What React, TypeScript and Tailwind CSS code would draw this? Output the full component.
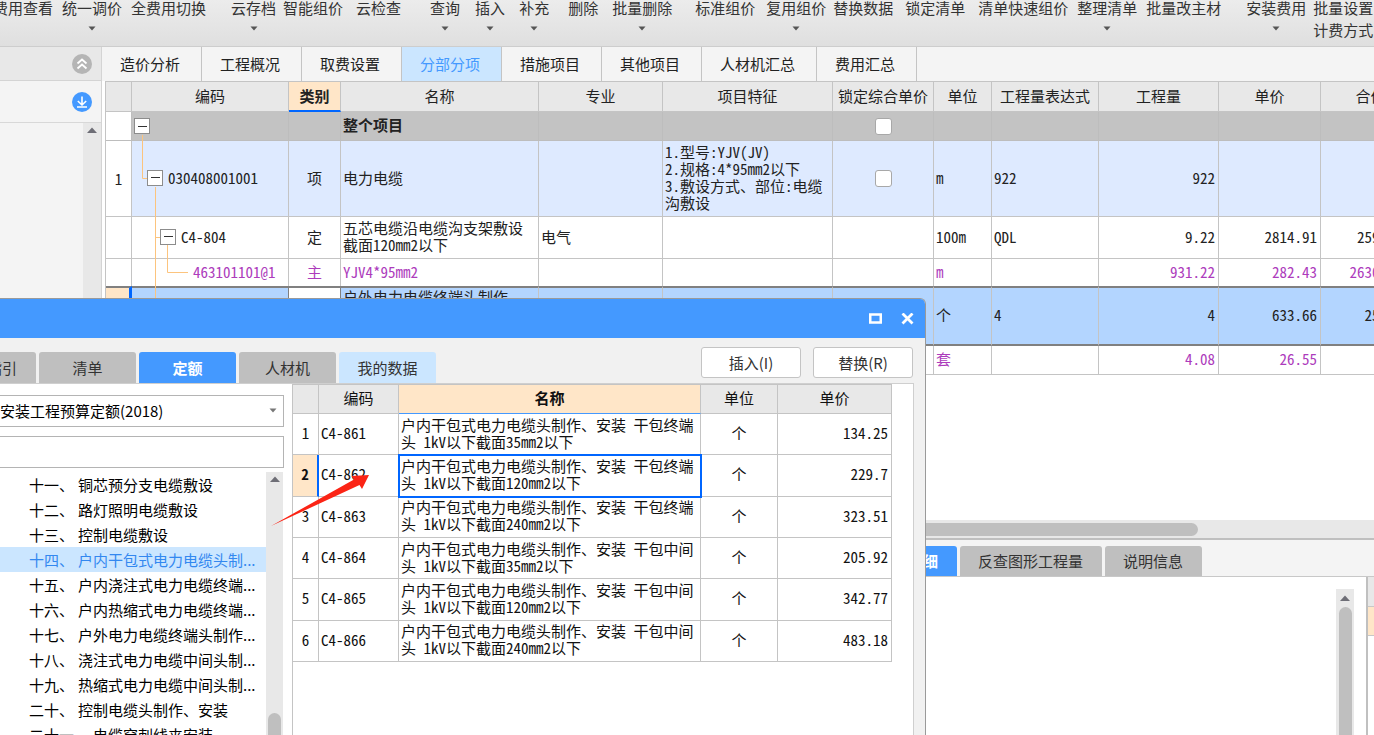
import React, { useState } from 'react';
import clsx from 'clsx';

const TOOLBAR = [
    { label: '费用查看', gap: '-ml-[7px]' },
    { label: '统一调价', gap: 'ml-[9px]', menu: true },
    { label: '全费用切换', gap: 'ml-[9px]' },
    { label: '云存档', gap: 'ml-[25px]', menu: true },
    { label: '智能组价', gap: 'ml-[7px]' },
    { label: '云检查', gap: 'ml-[13px]' },
    { label: '查询', gap: 'ml-[29px]', menu: true },
    { label: '插入', gap: 'ml-[15px]', menu: true },
    { label: '补充', gap: 'ml-[14px]', menu: true },
    { label: '删除', gap: 'ml-[19px]' },
    { label: '批量删除', gap: 'ml-[14px]', menu: true },
    { label: '标准组价', gap: 'ml-[23px]' },
    { label: '复用组价', gap: 'ml-[11px]', menu: true },
    { label: '替换数据', gap: 'ml-[7px]' },
    { label: '锁定清单', gap: 'ml-[12px]' },
    { label: '清单快速组价', gap: 'ml-[13px]' },
    { label: '整理清单', gap: 'ml-[9px]', menu: true },
    { label: '批量改主材', gap: 'ml-[9px]' },
    { label: '安装费用', gap: 'ml-[25px]', menu: true },
    { label: '批量设置', gap: 'ml-[7px]', second: '计费方式' },
];

const TABS = ['造价分析', '工程概况', '取费设置', '分部分项', '措施项目', '其他项目', '人材机汇总', '费用汇总'];

const COLUMNS = [
    { title: '', width: 26 },
    { title: '编码', width: 157 },
    { title: '类别', width: 52 },
    { title: '名称', width: 198 },
    { title: '专业', width: 124 },
    { title: '项目特征', width: 170 },
    { title: '锁定综合单价', width: 101 },
    { title: '单位', width: 58 },
    { title: '工程量表达式', width: 107 },
    { title: '工程量', width: 120 },
    { title: '单价', width: 102 },
    { title: '合价', width: 100 },
];

const ROWS = [
    { no: '', code: '', expand: true, indent: 'pl-[2px]', kind: '', name: '整个项目', major: '', feature: [], lock: true, unit: '', expr: '', qty: '', price: '', total: '', row: 'h-[29px] bg-[#c3c3c3] font-bold', line: 'border-[#bdbdbd]' },
    { no: '1', code: '030408001001', expand: true, indent: 'pl-[15px]', kind: '项', name: '电力电缆', major: '', feature: ['1.型号:YJV(JV)', '2.规格:4*95mm2以下', '3.敷设方式、部位:电缆沟敷设'], lock: true, unit: 'm', expr: '922', qty: '922', price: '', total: '', row: 'h-[76px] bg-[#deeaff]', line: 'border-[#c4c4c4]' },
    { no: '', code: 'C4-804', expand: true, indent: 'pl-[28px]', kind: '定', name: '五芯电缆沿电缆沟支架敷设 截面120mm2以下', major: '电气', feature: [], lock: false, unit: '100m', expr: 'QDL', qty: '9.22', price: '2814.91', total: '25953.47', row: 'h-[42px]', line: 'border-[#c4c4c4]' },
    { no: '', code: '463101101@1', expand: false, indent: 'pl-[61px]', kind: '主', name: 'YJV4*95mm2', major: '', feature: [], lock: false, unit: 'm', expr: '', qty: '931.22', price: '282.43', total: '263004.46', row: 'h-[27px] text-[#ad3cbc]', line: 'border-[#c4c4c4] border-b-0' },
    { no: '', code: '', expand: false, indent: '', kind: '', name: '户外电力电缆终端头制作、', major: '', feature: [], lock: false, unit: '个', expr: '4', qty: '4', price: '633.66', total: '2534.64', selected: true, row: 'h-[60px] bg-[#b3d5ff]', line: 'border-[#c4c4c4] border-t-2 border-b-2 border-t-[#808080] border-b-[#808080]' },
    { no: '', code: '', expand: false, indent: '', kind: '', name: '', major: '', feature: [], lock: false, unit: '套', expr: '', qty: '4.08', price: '26.55', total: '', row: 'h-[29px] text-[#ad3cbc]', line: 'border-[#c4c4c4]' },
];

const CHAPTERS = [
    ['十一、', '铜芯预分支电缆敷设'],
    ['十二、', '路灯照明电缆敷设'],
    ['十三、', '控制电缆敷设'],
    ['十四、', '户内干包式电力电缆头制...'],
    ['十五、', '户内浇注式电力电缆终端...'],
    ['十六、', '户内热缩式电力电缆终端...'],
    ['十七、', '户外电力电缆终端头制作...'],
    ['十八、', '浇注式电力电缆中间头制...'],
    ['十九、', '热缩式电力电缆中间头制...'],
    ['二十、', '控制电缆头制作、安装'],
    ['二十一、', '电缆穿刺线夹安装'],
];

const QUOTAS = [
    { code: 'C4-861', name: '户内干包式电力电缆头制作、安装 干包终端头 1kV以下截面35mm2以下', price: '134.25' },
    { code: 'C4-862', name: '户内干包式电力电缆头制作、安装 干包终端头 1kV以下截面120mm2以下', price: '229.7' },
    { code: 'C4-863', name: '户内干包式电力电缆头制作、安装 干包终端头 1kV以下截面240mm2以下', price: '323.51' },
    { code: 'C4-864', name: '户内干包式电力电缆头制作、安装 干包中间头 1kV以下截面35mm2以下', price: '205.92' },
    { code: 'C4-865', name: '户内干包式电力电缆头制作、安装 干包中间头 1kV以下截面120mm2以下', price: '342.77' },
    { code: 'C4-866', name: '户内干包式电力电缆头制作、安装 干包中间头 1kV以下截面240mm2以下', price: '483.18' },
];

// half-width latin, so two digits take the room of one Chinese character
const GRID_FONT = "[font-feature-settings:'hwid'] leading-[17px]";

const Caret = ({ up = false, className = '' }: { up?: boolean; className?: string }) => (
    <svg width="10" height="6" viewBox="0 0 10 6" className={className} aria-hidden="true">
        <path d={up ? 'M0 6L5 0.5L10 6Z' : 'M1.5 0.5H8.5L5 4.5Z'} fill="currentColor" />
    </svg>
);

const Toolbar = () => (
    <div className="flex h-[47px] shrink-0 items-start overflow-hidden border-b border-[#cdcdcd] bg-gradient-to-b from-[#ececec] to-[#dfdfdf]">
        {TOOLBAR.map((item) => (
            <button key={item.label} type="button" className={clsx('-mt-[3px] flex shrink-0 flex-col items-center leading-[22px] text-[#333]', item.gap)}>
                <span>{item.label}</span>
                {item.second && <span>{item.second}</span>}
                {item.menu && <Caret className="mt-[7px] text-[#555]" />}
            </button>
        ))}
    </div>
);

const SidePanel = () => (
    <aside className="flex w-[102px] shrink-0 flex-col border-r border-[#d4d4d4] bg-[#f4f4f4]">
        <div className="flex h-[34px] shrink-0 items-center justify-end border-b border-[#d4d4d4] bg-[#e8e8e8] pr-[9px]">
            <button type="button" aria-label="折叠">
                <svg width="20" height="20" viewBox="0 0 20 20" className="block">
                    <circle cx="10" cy="10" r="10" fill="#b5b5b5" />
                    <path d="M5.5 9.5L10 5.5L14.5 9.5M5.5 14.5L10 10.5L14.5 14.5" fill="none" stroke="#fff" strokeWidth="1.8" />
                </svg>
            </button>
        </div>
        <div className="flex h-[42px] shrink-0 items-center justify-end border-b border-[#d8d8d8] pr-[9px]">
            <button type="button" aria-label="下载">
                <svg width="20" height="20" viewBox="0 0 20 20" className="block">
                    <circle cx="10" cy="10" r="10" fill="#4499ff" />
                    <path d="M10 4.5V13M5.8 9L10 13L14.2 9M5 15H15" fill="none" stroke="#fff" strokeWidth="1.6" />
                </svg>
            </button>
        </div>
        <div className="flex flex-1 justify-end">
            <div className="flex w-[18px] justify-center bg-[#e8e8e8] pt-1">
                <Caret up className="text-[#6e6e76]" />
            </div>
        </div>
    </aside>
);

const BillTable = () => (
    <div className={clsx('relative min-h-0 flex-1 overflow-hidden bg-white pl-[3px]', GRID_FONT)}>
        <table className="w-[1316px] table-fixed border-separate border-spacing-0 border-l border-[#c4c4c4] text-[#222]">
            <colgroup>
                {COLUMNS.map((col, i) => <col key={i} style={{ width: col.width }} />)}
            </colgroup>
            <thead>
                <tr className="h-[31px]">
                    {COLUMNS.map((col, i) => (
                        <th
                            key={i}
                            className={clsx(
                                'border-t border-r border-b border-[#c4c4c4] p-0 pb-[2px] whitespace-nowrap',
                                col.title === '类别' ? 'border-b-2 border-b-[#0066ff] bg-[#ffe6c8] font-bold' : 'bg-[#e8e8e8] font-normal',
                            )}
                        >
                            {col.title}
                        </th>
                    ))}
                </tr>
            </thead>
            <tbody>
                {ROWS.map((r, i) => {
                    const line = clsx('border-r border-b p-0', r.line);
                    const cell = clsx(line, 'pb-[3px]');
                    return (
                        <tr key={i} className={r.row}>
                            <td className={clsx(line, 'text-center text-[#222]', r.selected ? 'border-r-[3px] border-r-[#0066ff] bg-[#ffe6c8]' : 'bg-white')}>{r.no}</td>
                            <td className={clsx(line, r.indent, r.code && 'pb-[2px]', r.selected && 'border-r-[#808080]')}>
                                <div className="flex items-center gap-[5px]">
                                    {r.expand && (
                                        <button type="button" aria-label="收起" className="flex size-4 items-center justify-center border border-[#8c8c8c] bg-white">
                                            <span className="h-px w-[9px] bg-[#333]" />
                                        </button>
                                    )}
                                    {r.code}
                                </div>
                            </td>
                            <td className={clsx(cell, 'text-center', r.selected && 'border-r-[#808080] bg-white')}>{r.kind}</td>
                            <td className={clsx(cell, 'px-[2px]', r.selected && 'align-top')}>{r.name}</td>
                            <td className={clsx(cell, 'px-[2px]')}>{r.major}</td>
                            <td className={clsx(cell, 'px-[2px]')}>
                                {r.feature.map((text) => <div key={text}>{text}</div>)}
                            </td>
                            <td className={line}>
                                {r.lock && <input type="checkbox" aria-label="锁定综合单价" className="mx-auto block size-[17px] appearance-none rounded-[3px] border border-[#a8a8a8] bg-white" />}
                            </td>
                            <td className={clsx(cell, 'px-[2px]')}>{r.unit}</td>
                            <td className={clsx(cell, 'px-[2px]')}>{r.expr}</td>
                            <td className={clsx(cell, 'px-[3px] text-right')}>{r.qty}</td>
                            <td className={clsx(cell, 'px-[3px] text-right')}>{r.price}</td>
                            <td className={clsx(cell, 'px-[3px] text-right')}>{r.total}</td>
                        </tr>
                    );
                })}
            </tbody>
        </table>
        {/* Tree connectors */}
        <svg width="60" height="186" viewBox="0 0 60 186" className="pointer-events-none absolute top-[31px] left-[30px]" aria-hidden="true">
            <path d="M10.5 23V66.5H15M23.5 75V186M23.5 125.5H28M35.5 133V160.5H56" fill="none" stroke="#fcc47e" />
        </svg>
    </div>
);

const DetailPane = () => (
    <div className="flex h-[195px] shrink-0 flex-col">
        <div className="flex h-[37px] shrink-0 items-end gap-[3px] border-b border-[#c8c8c8] bg-[#f4f4f4] pl-[743px]">
            <button type="button" className="h-[30px] rounded-t-[3px] bg-[#4499ff] pr-[19px] pl-[18px] font-bold text-white">工程量明细</button>
            <button type="button" className="h-[30px] rounded-t-[3px] bg-[#bfbfbf] pr-[19px] pl-[18px] text-[#333]">反查图形工程量</button>
            <button type="button" className="h-[30px] rounded-t-[3px] bg-[#bfbfbf] pr-[19px] pl-[18px] text-[#333]">说明信息</button>
        </div>
        <div className="flex min-h-0 flex-1 bg-white">
            <div className="flex flex-1 justify-end pt-3 pr-3">
                <div className="flex w-[18px] flex-col items-center bg-[#e8e8e8] pt-[6px]">
                    <Caret up className="text-[#6e6e76]" />
                    <div className="mt-[6px] w-[13px] flex-1 rounded-t-full bg-[#bfbfbf]" />
                </div>
            </div>
            <div className="w-2 border-l-2 border-[#c0c0c0]">
                <div className="h-[30px] border-b border-[#c8c8c8] bg-[#e8e8e8]" />
                <div className="h-[29px] border-b border-[#c8c8c8] bg-[#ffe6c8]" />
            </div>
        </div>
    </div>
);

const QuotaDialog = () => {
    const [chapter, setChapter] = useState(3);
    const [current, setCurrent] = useState(1);
    const cell = 'border-r border-b border-[#c4c4c4] p-0 pb-[3px]';

    return (
        <div role="dialog" aria-label="查询" className="absolute top-[298px] bottom-0 left-0 flex w-[926px] flex-col overflow-hidden rounded-tr-[6px] border-t border-r border-[#9a9a9a] bg-[#f1f1f1]">
            <div className="flex h-[39px] shrink-0 items-center justify-end gap-[19px] bg-[#4499ff] pr-[11px]">
                <button type="button" aria-label="最大化">
                    <svg width="13" height="12" viewBox="0 0 13 12" className="block"><rect x="1.25" y="1.5" width="10.5" height="8" fill="none" stroke="#fff" strokeWidth="2.5" /></svg>
                </button>
                <button type="button" aria-label="关闭">
                    <svg width="13" height="12" viewBox="0 0 13 12" className="block"><path d="M1.5 0.5L11.5 10.5M11.5 0.5L1.5 10.5" stroke="#fff" strokeWidth="2.8" /></svg>
                </button>
            </div>

            <div className="flex h-[45px] shrink-0 items-end gap-[3px] text-[#333]">
                <button type="button" className="flex h-[31px] w-9 items-center justify-end overflow-hidden rounded-tr-[3px] bg-[#bfbfbf] pr-[19px] whitespace-nowrap">清单指引</button>
                <button type="button" className="h-[31px] w-[97px] rounded-t-[3px] bg-[#bfbfbf]">清单</button>
                <button type="button" className="h-[31px] w-[97px] rounded-t-[3px] bg-[#4499ff] font-bold text-white">定额</button>
                <button type="button" className="h-[31px] w-[97px] rounded-t-[3px] bg-[#bfbfbf]">人材机</button>
                <button type="button" className="h-[31px] w-[97px] rounded-t-[3px] bg-[#cbe6ff]">我的数据</button>
                <div className="flex flex-1 justify-end gap-3 self-start pt-[9px] pr-3">
                    <button type="button" className="h-[31px] w-[100px] rounded-[3px] border border-[#c4c4c4] bg-white">插入(I)</button>
                    <button type="button" className="h-[31px] w-[100px] rounded-[3px] border border-[#c4c4c4] bg-white">替换(R)</button>
                </div>
            </div>

            <div className="mr-[11px] flex min-h-0 flex-1 border-t border-r border-[#cfcfcf] bg-white">
                <div className="mr-2 flex w-[284px] flex-col pt-[11px]">
                    <div className="relative shrink-0 text-black">
                        <select aria-label="定额库" className="block h-8 w-full appearance-none border border-l-0 border-[#b4b4b4] bg-white">
                            <option>安装工程预算定额(2018)</option>
                        </select>
                        <Caret className="pointer-events-none absolute top-[13px] right-[6px] text-[#777]" />
                    </div>
                    <input type="text" aria-label="查找定额" className="mt-[9px] h-8 w-full shrink-0 border border-l-0 border-[#b4b4b4] bg-white" />
                    <div className="mt-1 flex min-h-0 flex-1 overflow-hidden">
                        <div className="w-[266px] text-black">
                            {CHAPTERS.map(([no, name], i) => (
                                <button
                                    key={no}
                                    type="button"
                                    onClick={() => setChapter(i)}
                                    className={clsx('flex h-[25px] w-full items-center gap-1 pl-[29px] whitespace-nowrap', i === chapter && 'bg-[#cbe6ff] text-[#3388f0]')}
                                >
                                    <span>{no}</span>
                                    <span>{name}</span>
                                </button>
                            ))}
                        </div>
                        <div className="flex w-[17px] flex-col items-center bg-[#e8e8e8] pt-1">
                            <Caret up className="shrink-0 text-[#6e6e76]" />
                            <div className="mt-auto h-[22px] w-[13px] shrink-0 rounded-t-full bg-[#bfbfbf]" />
                        </div>
                    </div>
                </div>

                <div className={clsx('flex-1 border-l border-[#c4c4c4] text-[#111]', GRID_FONT)}>
                    <table className="h-[278px] w-[599px] table-fixed border-separate border-spacing-0 border-t border-[#c4c4c4]">
                        <colgroup>
                            <col className="w-[26px]" />
                            <col className="w-[80px]" />
                            <col className="w-[302px]" />
                            <col className="w-[77px]" />
                            <col className="w-[114px]" />
                        </colgroup>
                        <thead>
                            <tr className="h-[29px] bg-[#e8e8e8]">
                                <th className={cell} />
                                <th className={clsx(cell, 'font-normal')}>编码</th>
                                <th className={clsx(cell, 'border-b-[#4499ff] bg-[#ffe6c8] font-bold')}>名称</th>
                                <th className={clsx(cell, 'font-normal')}>单位</th>
                                <th className={clsx(cell, 'font-normal')}>单价</th>
                            </tr>
                        </thead>
                        <tbody>
                            {QUOTAS.map((q, i) => (
                                <tr key={q.code} onClick={() => setCurrent(i)}>
                                    <td className={clsx(cell, 'text-center', i === current && 'border-r-2 border-r-[#0066ff] bg-[#ffe6c8] font-bold')}>{i + 1}</td>
                                    <td className={clsx(cell, 'px-[2px]')}>{q.code}</td>
                                    <td className={clsx(cell, 'px-[2px]', i === current && 'outline-2 -outline-offset-1 outline-[#0066ff]')}>{q.name}</td>
                                    <td className={clsx(cell, 'text-center')}>个</td>
                                    <td className={clsx(cell, 'px-[3px] text-right')}>{q.price}</td>
                                </tr>
                            ))}
                        </tbody>
                    </table>
                </div>
            </div>
        </div>
    );
};

export default function App() {
    const [tab, setTab] = useState('分部分项');

    return (
        <div className="relative flex h-screen flex-col overflow-hidden bg-[#f4f4f4] font-['Noto_Sans_CJK_SC',sans-serif] text-[15px] leading-[22px]">
            <Toolbar />
            <div className="flex min-h-0 flex-1">
                <SidePanel />
                <main className="flex min-w-0 flex-1 flex-col">
                    <nav className="flex h-[34px] shrink-0">
                        {TABS.map((name) => (
                            <button
                                key={name}
                                type="button"
                                onClick={() => setTab(name)}
                                className={clsx('border-r border-[#c4c4c4] pr-[21px] pl-[18px]', tab === name ? 'bg-[#cbe6ff] text-[#4499ff]' : 'text-[#222]')}
                            >
                                {name}
                            </button>
                        ))}
                    </nav>
                    <BillTable />
                    <div className="h-[20px] shrink-0 border-b-2 border-[#bfbfbf] bg-[#e8e8e8] pt-[3px] pl-[3px]">
                        <div className="h-[13px] w-[1093px] rounded-full bg-[#bfbfbf]" />
                    </div>
                    <DetailPane />
                </main>
            </div>

            <QuotaDialog />

            {/* Pointer to the quota to pick */}
            <svg width="100" height="54" viewBox="0 0 100 54" className="pointer-events-none absolute top-[473px] left-[270px]" aria-hidden="true">
                <path d="M1 53L84 6.5L81.5 3L99 2L92 16L89.5 12Z" fill="#fb2415" />
            </svg>
        </div>
    );
}
